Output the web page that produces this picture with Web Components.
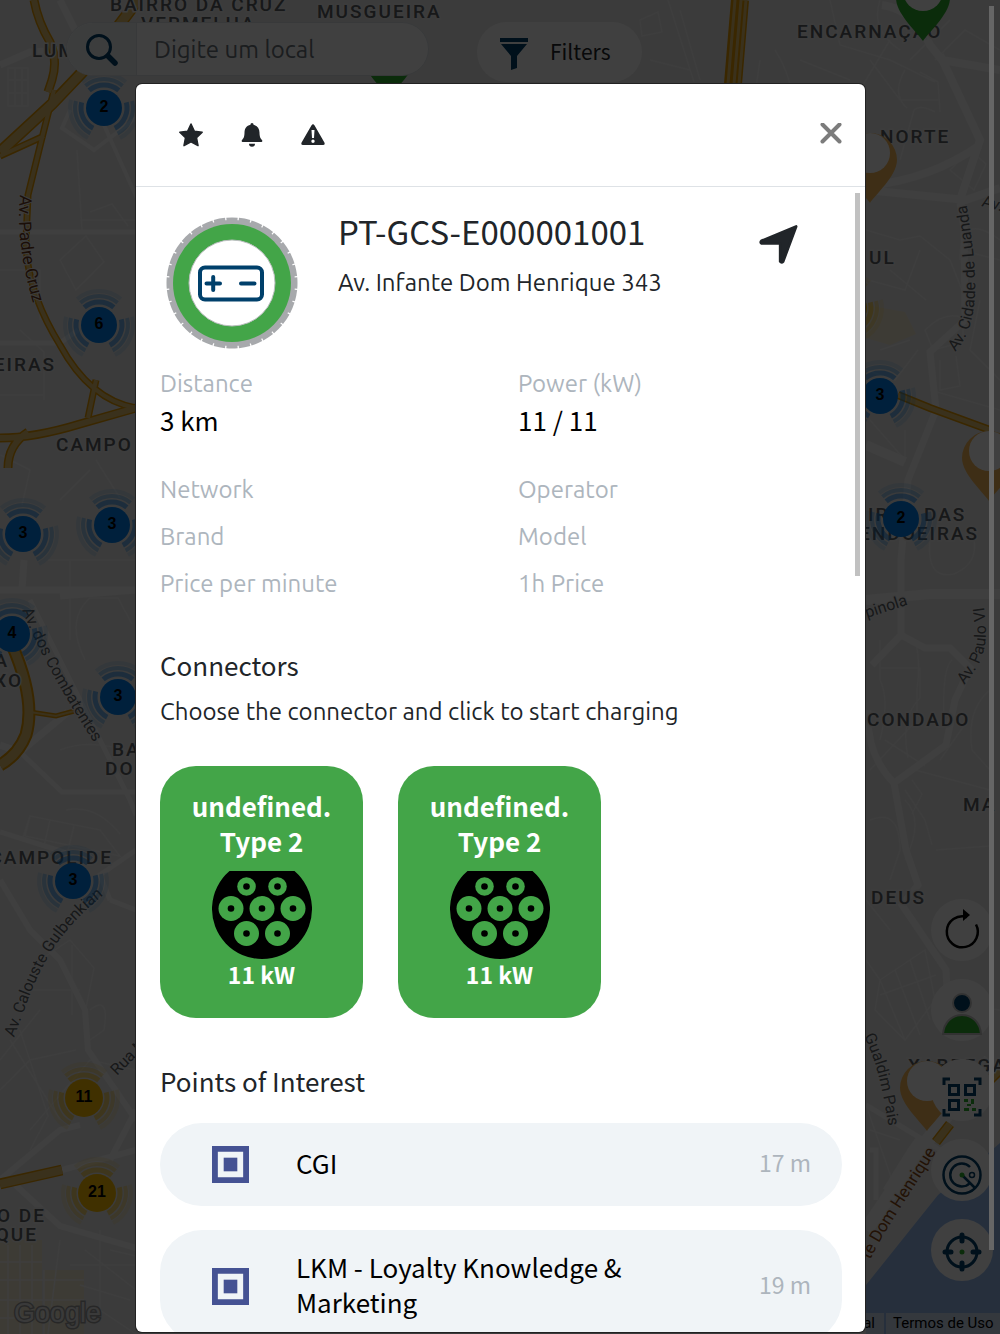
<!DOCTYPE html>
<html lang="pt">
<head>
<meta charset="utf-8">
<title>Charging map</title>
<style>
  html, body { margin: 0; height: 100%; overflow: hidden; }
  body {
    --title: "Noto Sans CJK JP", "Noto Sans", sans-serif;
    --body: Ubuntu, "Noto Sans", sans-serif;
    --green: #43a548; --navy: #00406b; --ink: #212529; --muted: #adb5bd;
    font: 24px/36px var(--body); color: var(--ink); background: #3b3b3b;
  }
</style>
</head>
<body>
<charging-app></charging-app>
<script>
const define = (name, render) => customElements.define(name, class extends HTMLElement {
  constructor() { super(); this.attachShadow({ mode: 'open' }); }
  connectedCallback() { this.shadowRoot.innerHTML = render(this); }
});

/* ---------- map ---------- */
const arcs = (r, w, o) => {
  const p = a => `${(r * Math.cos(a * Math.PI / 180)).toFixed(1)} ${(r * Math.sin(a * Math.PI / 180)).toFixed(1)}`;
  return [[-130, -50], [-14, 62], [118, 194]].map(([a, b]) =>
    `<path d="M${p(a)}A${r} ${r} 0 0 1 ${p(b)}" fill="none" stroke="currentColor" stroke-width="${w}" opacity="${o}"/>`).join('');
};
const cluster = ([x, y, n, c]) => `<g transform="translate(${x} ${y})" color="${c ? '#ffbf00' : '#0080f0'}">
  ${arcs(23, 5, .5)}${arcs(29, 4, .3)}${arcs(34, 4, .12)}
  <circle r="${c ? 19 : 18}" fill="currentColor"/>${n ? `<text class="count" y="4">${n}</text>` : ''}</g>`;
const pin = (x, y, c) => `<g transform="translate(${x} ${y})"><path d="M0 49C-5 41-27 22-27 6A27 27 0 0 1 27 6C27 22 5 41 0 49Z" fill="${c}"/><circle cy="-1" r="20" fill="#fff"/></g>`;
const area = ([x, y, t, a]) => `<text class="area" x="${x}" y="${y}" text-anchor="${a || 'start'}">${t}</text>`;
const streets = [
  ['M20 195C17 225 20 270 42 330', 'Av. Padre Cruz', '#6b3a1c', 17],
  ['M22 610C38 650 60 690 100 752', 'Av. dos Combatentes'],
  ['M14 1038C34 985 44 940 110 890', 'Av. Calouste Gulbenkian'],
  ['M117 1076L160 1032', 'Rua M'],
  ['M981 206L1020 216', 'Av.'],
  ['M955 352C983 322 977 270 966 200', 'Av. Cidade de Luanda'],
  ['M867 618L922 600', 'pinola'],
  ['M964 685C985 660 990 645 983 600', 'Av. Paulo VI'],
  ['M864 1036C876 1060 882 1085 890 1135', 'Gualdim Pais'],
  ['M870 1260C890 1220 914 1190 948 1132', 'te Dom Henrique', '#8a4a14', 17]
];
define('city-map', () => `
<style>
  :host { display: block; height: 100%; }
  svg { display: block; width: 100%; height: 100%; background: #ebebeb; }
  .minor path { fill: none; stroke: #f5f5f5; stroke-width: 1.5; }
  .road path { fill: none; stroke: #fafafa; stroke-width: 7; }
  .edge path { fill: none; stroke: #e79b00; }
  .fill path { fill: none; stroke: #e8c470; }
  .area { font: 500 19px Roboto, sans-serif; letter-spacing: 2px; fill: #5c6266; stroke: #f0f0f0; stroke-width: 3px; paint-order: stroke; }
  .street { font-family: Roboto, sans-serif; stroke: #f0f0f0; stroke-width: 2px; paint-order: stroke; }
  .count { font: bold 16px "Liberation Sans", sans-serif; text-anchor: middle; fill: #000; }
  .logo { font: 27px "Liberation Sans", sans-serif; fill: #e8e8e8; stroke: #9c9c9c; stroke-width: 3px; paint-order: stroke; }
  .legal { font: 15px Roboto, sans-serif; fill: #000; }
</style>
<svg viewBox="0 0 1000 1334" preserveAspectRatio="xMidYMid slice" role="img" aria-label="Map">
  <path d="M1000 1143L980 1160L938 1195L866 1285V1334H1000Z" fill="#98bdf0"/>
  <path d="M0 1240H42V1334H0ZM44 1270H84V1334H44Z" fill="#f4ecd2"/>
  <path d="M866 305L905 312L916 334L890 345L866 338Z" fill="#f4ecd2"/>
  <g class="minor">
    <path d="M8 68h20v38h-20zM8 80h20M8 93h20M15 68v38M22 68v38"/>
    <path d="M80 220H136M77 150L82 230M90 212L112 204L128 226M60 260L86 236L104 262L76 290ZM0 270H40V320M20 330L44 352V400M0 395H44M96 460L120 498M60 500L90 470M0 455L30 470L22 505M48 560H136M70 560V640M85 660q-20-40 5-62h28l14 26"/>
    <path d="M60 750Q90 738 130 752M30 816L100 830L120 856L25 836ZM30 816L22 840M50 820L44 846M74 826L68 850M66 810q30-6 54 24"/>
    <path d="M72 945v70M40 960l30-20 24 28-8 40M20 990h60M10 1040L60 1120M0 1090L30 1060L76 1050M30 1130L90 1060L136 1070M20 1030L48 1116L30 1150M0 1060L40 1010M90 1010q20-16 14 20l-14 10"/>
    <path d="M8 1245v89M20 1245v89M32 1245v89M44 1270v64M0 1262h42M0 1280h84M0 1300h84M0 1318h84M60 1240L48 1334M85 1250L136 1290M100 1230V1310L136 1334M110 1250L136 1256M70 1265H136M80 1285L130 1300"/>
    <path d="M640 20l18-8 4 20-20 4zM680 10L700 80M690 70L650 60M668 0L694 82M760 60L750 130M775 50Q800 90 790 130M880 0Q870 30 900 50M830 0L840 45L890 60L935 82M800 60L850 80M870 60L900 100L940 100M890 40L860 90M910 60L950 20M905 70q-14 24 2 38M920 72l18 10 2 30M935 60l30-30 35 20M950 170l20-20 16 14-12 26zM900 160L914 110Q920 104 935 112"/>
    <path d="M866 230L900 240L920 236L950 260L966 300M920 250L905 290L868 280M890 270L926 300M925 330q20-20 38-12v24l-30 8zM940 360v30l20-4-4-30M905 430v30L870 420M880 350L910 340M866 370L895 380L918 350M930 390L1000 410M980 300L970 350L1000 380M1000 260L960 250M1000 240q-40-30-40 20"/>
    <path d="M930 540q-4 40 24 34 24-10 20-34M880 668h40v30q-20 20-12 60M880 640v40q10 20 0 60M915 640q6 20 2 50v30L870 770M952 660q-10 8-8 60M905 790L925 820L932 845M915 770L990 790M885 740l40 26M968 720L940 760M990 690q-24 20-18 60l18 20M936 850L990 846M905 800q20 20 0 60M870 820q30-12 30 30l-10 30M912 780l10 14-10 20"/>
    <path d="M880 980L925 950L935 1000L905 1040L875 1010ZM880 980L905 1040M895 970L920 1035M910 960L930 1020M866 960L880 980M932 1000L1000 1010M880 995L936 975M866 900L890 930M870 1130L900 1140M866 1105L892 1180"/>
  </g>
  <g class="road">
    <path d="M0 65L30 52L66 50L80 40L60 0"/><path d="M104 125L140 205M70 110L62 128L94 150L136 118" style="stroke-width:4"/>
    <path d="M0 232L136 232M0 343H60L78 330" style="stroke-width:5"/><path d="M0 590H136L60 596M22 590L24 560M0 745L20 752L68 712"/>
    <path d="M30 600L130 800L136 815M20 752L62 792H136" style="stroke-width:5"/><path d="M0 832L70 854M110 900L136 910M136 850L100 875L110 900" style="stroke-width:5"/>
    <path d="M0 880L30 930L60 960L85 1010L88 1050L136 1120M136 1110L110 1160M0 1180L60 1130L80 1125M10 1180L60 1226L136 1248M62 1170L136 1150" style="stroke-width:6"/>
    <path d="M882 5Q915 10 930 45L942 60L1000 70M940 55L980 140L960 200L964 225M866 190L966 200L1000 188M866 186Q930 180 980 145" style="stroke-width:8"/>
    <path d="M964 225L965 320L930 352L936 410L908 480L901 560L901 635L872 665" style="stroke-width:7"/><path d="M866 445L905 462M866 600L930 594H1000" style="stroke-width:10"/>
    <path d="M901 635L925 648H950L970 668L955 700L946 745L894 783Q866 755 868 710M894 783L906 850L918 885L902 905L946 970L948 1010" style="stroke-width:7"/>
    <path d="M866 1105L940 1150M885 1190L910 1150L920 1136M870 1150H876V1200" style="stroke-width:5"/><path d="M990 1060L920 1150L866 1230" style="stroke-width:14"/>
  </g>
  <g class="edge">
    <path d="M34 0Q38 22 50 42Q58 60 52 80L48 92" style="stroke-width:9"/><path d="M138 0L90 64L52 104L0 152" style="stroke-width:12"/>
    <path d="M54 90L42 138L28 195L26 240Q26 290 60 345Q90 400 136 408M0 156L44 136M96 380L88 418" style="stroke-width:7"/><path d="M0 438Q34 438 80 424L136 408M28 432Q8 445 8 468" style="stroke-width:9"/>
    <path d="M12 645Q36 700 26 735Q18 755 0 765" style="stroke-width:13"/><path d="M30 712L56 716L78 710" style="stroke-width:5"/><path d="M0 1184L62 1170" style="stroke-width:11"/>
    <path d="M740 0L733 84" style="stroke-width:18"/><path d="M898 395L930 408L990 430" style="stroke-width:8"/><path d="M1000 1070L988 1082M950 1124L936 1142" style="stroke-width:10"/>
  </g>
  <g class="fill">
    <path d="M34 0Q38 22 50 42Q58 60 52 80L48 92" style="stroke-width:6"/><path d="M138 0L90 64L52 104L0 152" style="stroke-width:9"/>
    <path d="M54 90L42 138L28 195L26 240Q26 290 60 345Q90 400 136 408M0 156L44 136M96 380L88 418" style="stroke-width:4"/><path d="M0 438Q34 438 80 424L136 408M28 432Q8 445 8 468" style="stroke-width:6"/>
    <path d="M12 645Q36 700 26 735Q18 755 0 765" style="stroke-width:9"/><path d="M30 712L56 716L78 710" style="stroke-width:2"/><path d="M0 1184L62 1170" style="stroke-width:8"/>
    <path d="M735 0L728 84M741 0L734 84M746 0L739 84" style="stroke-width:3"/><path d="M898 395L930 408L990 430" style="stroke-width:5"/><path d="M1000 1070L988 1082M950 1124L936 1142" style="stroke-width:7"/>
  </g>
  ${[[110, 11, 'BAIRRO DA CRUZ'], [141, 30, 'VERMELHA'], [317, 18, 'MUSGUEIRA'], [32, 57, 'LUM'], [797, 38, 'ENCARNAÇÃO'], [880, 143, 'NORTE'], [869, 264, 'UL'],
     [56, 371, 'EIRAS', 'end'], [56, 451, 'CAMPO'], [868, 521, 'IR'], [924, 521, 'DAS'], [979, 540, 'ENDOEIRAS', 'end'], [9, 667, 'A', 'end'], [23, 687, 'XO', 'end'], [112, 756, 'BA'],
     [105, 775, 'DO'], [113, 864, 'CAMPOLIDE', 'end'], [867, 726, 'CONDADO'], [963, 811, 'MA'], [871, 904, 'DEUS'], [908, 1072, 'XABREGAS'], [46, 1222, 'O DE', 'end'], [38, 1241, 'QUE', 'end']].map(area).join('')}
  ${streets.map(([d, t, c, s], i) => `<path id="s${i}" d="${d}" fill="none"/><text class="street" font-size="${s || 16}" fill="${c || '#5c6266'}"><textPath href="#s${i}">${t}</textPath></text>`).join('')}
  ${pin(389, 49, '#2fae2f')}${pin(923, -8, '#2fae2f')}${pin(870, 154, '#f5b85a')}${pin(989, 452, '#f5b85a')}${pin(927, 1082, '#f5b85a')}
  ${[[104, 108, 2], [99, 325, 6], [23, 534, 3], [112, 525, 3], [12, 634, 4], [118, 697, 3], [73, 881, 3], [880, 396, 3], [901, 519, 2], [84, 1098, 11, 1], [97, 1193, 21, 1], [848, 308, 0, 1]].map(cluster).join('')}
  <text class="logo" x="14" y="1322">Google</text>
  <path d="M860 1313H884V1334H860ZM886 1313H1000V1334H886Z" fill="#f5f5f5" opacity=".6"/>
  <text class="legal" x="875" y="1328" text-anchor="end">al</text><text class="legal" x="893" y="1328">Termos de Uso</text>
</svg>`);

/* ---------- controls on the map ---------- */
define('search-box', () => `
<style>
  :host { display: block; flex: 0 1 363px; min-width: 0; }
  form { display: flex; height: 54px; box-sizing: border-box; border: 1px solid #dfe4e8; border-radius: 27px; overflow: hidden; background: #fff; }
  button { flex: none; width: 70px; border: 0; border-right: 1px solid #dfe4e8; background: #f0f4f4; padding: 0 0 0 18px; }
  svg { display: block; width: 34px; height: 34px; }
  input { flex: 1; width: 0; min-width: 0; border: 0; padding: 0 17px; font: 24px var(--body); background: none; }
  input::placeholder { color: #6c757d; opacity: 1; }
</style>
<form role="search">
  <button type="button" aria-label="Search"><svg viewBox="0 0 34 34" fill="none" stroke="#00406b"><circle cx="14" cy="15" r="11.500" stroke-width="3"/><path d="M23 24L30 31" stroke-width="5.500" stroke-linecap="round"/></svg></button>
  <input type="search" aria-label="Digite um local" placeholder="Digite um local">
</form>`);
define('filter-button', () => `
<style>
  :host { display: block; }
  button { display: flex; align-items: center; gap: 21px; height: 60px; padding: 0 32px 2px 23px; border: 0; border-radius: 30px; background: #fff; font: 21px/36px var(--title); color: #212529; }
  svg { width: 29px; height: 33px; margin-top: 4px; }
</style>
<button type="button"><svg viewBox="0 0 29 33" fill="#00406b"><path d="M0 1H28V5H0ZM1 7H27L17 19V31L11 33V19Z"/></svg><slot></slot></button>`);
const tools = {
  refresh: ['Refresh', 0, '<path d="M34 14.500A15.500 15.500 0 1 1 25 7" fill="none" stroke="#000" stroke-width="2.500"/><path d="M21-1L28 5L21 11Z"/>'],
  user: ['Account', -4, '<path d="M1 40C2 28 10 21 20 21S38 28 39 40Z" fill="#2fae2f" stroke="#c8c8c8" stroke-width="2"/><circle cx="20" cy="9" r="9" fill="#00406b" stroke="#c8c8c8" stroke-width="2"/>'],
  scan: ['Scan code', -7, '<g fill="none" stroke="#00406b" stroke-width="3"><path d="M2 8V2H8M32 2H38V8M38 32V38H32M8 38H2V32"/><path d="M7.500 8.500h9v9h-9zM23.500 8.500h9v9h-9zM7.500 23.500h9v9h-9z"/></g><path d="M22 22h4v3h-4zM29 22h3v5h-3zM25 27h4v2h-4zM22 31h5v3h-5zM30 31h4v3h-4z" fill="#2fae2f"/>'],
  radar: ['Nearby', -5, '<g fill="none" stroke="#00406b" stroke-width="2.500"><circle cx="20" cy="20" r="18.500"/><path d="M28 12A11.500 11.500 0 1 0 28 28M20 20L33 33"/><circle cx="30" cy="20" r="2.500" stroke-width="1.500"/></g><circle cx="20" cy="20" r="2.500" fill="#2fae2f"/>'],
  locate: ['My location', -2, '<g fill="none" stroke="#00406b"><circle cx="20" cy="20" r="15" stroke-width="3"/><path d="M20 3V9M20 31V37M3 20H9M31 20H37" stroke-width="5" stroke-linecap="round"/></g><circle cx="20" cy="20" r="2.500" fill="#2fae2f"/>']
};
define('map-tool', el => {
  const [label, top, art] = tools[el.getAttribute('kind')];
  return `
<style>
  :host { display: block; }
  button { display: grid; place-items: center; width: 62px; height: 62px; border: 0; border-radius: 50%; background: #fff; padding: 0; }
  svg { width: 40px; height: 40px; overflow: visible; }
</style>
<button type="button" aria-label="${label}"><svg viewBox="0 ${top} 40 40">${art}</svg></button>`;
});

/* ---------- dialog parts ---------- */
const icons = {
  star: ['Favourite', '<path d="M12 1L15.400 8.300L23.200 9.200L17.500 14.600L19 22.600L12 18.800L5 22.600L6.500 14.600L.8 9.200L8.600 8.300Z" stroke="currentColor" stroke-width="1.500" stroke-linejoin="round"/>'],
  bell: ['Notify', '<path d="M12 0C13 0 13.500.700 13.500 1.800C17.500 2.600 19.500 5.700 19.500 9.500C19.500 14 20.600 15.500 22 17C22.700 18 22.200 19 21 19H3C1.800 19 1.300 18 2 17C3.400 15.500 4.500 14 4.500 9.500C4.500 5.700 6.500 2.600 10.500 1.800C10.500.700 11 0 12 0ZM9 20.800H15A3 3 0 0 1 9 20.800Z"/>'],
  warn: ['Report', '<path fill-rule="evenodd" d="M10.400 2.400Q12 0 13.600 2.400L23.400 19.600Q24.400 22 22 22H2Q-.4 22 .6 19.600ZM10.500 7L11 15H13L13.500 7ZM12 16.500A1.700 1.700 0 1 0 12 19.900A1.700 1.700 0 1 0 12 16.500Z"/>'],
  close: ['Close', '<path d="M3.500 1.500L20.500 18.500M20.500 1.500L3.500 18.500" stroke="#7c7c7c" stroke-width="4" stroke-linecap="round"/>'],
  navigate: ['Directions', '<path d="M22.300 1.500L14.500 22.500Q13.500 23.500 12.700 22.500V11.700H1.500Q.5 11 1.500 10.100Z" stroke="currentColor" stroke-width="1.600" stroke-linejoin="round"/>']
};
define('icon-button', el => `
<style>
  :host { display: block; --size: 24px; }
  button { display: block; padding: 0; border: 0; background: none; color: #212529; }
  svg { display: block; width: var(--size); height: var(--size); fill: currentColor; }
</style>
<button type="button" aria-label="${icons[el.getAttribute('icon')][0]}"><svg viewBox="0 0 24 24">${icons[el.getAttribute('icon')][1]}</svg></button>`);
define('station-badge', () => `
<style>:host { display: block; } svg { display: block; width: 132px; height: 132px; }</style>
<svg viewBox="0 0 132 132" role="img" aria-label="Available">
  <circle cx="66" cy="66" r="60" fill="none" stroke="#a7a9ac" stroke-width="6"/>
  <circle cx="66" cy="66" r="63" fill="none" stroke="#a7a9ac" stroke-width="5" pathLength="320" stroke-dasharray="9 1" stroke-dashoffset="4.500"/>
  <circle cx="66" cy="66" r="59" fill="#43a548"/><circle cx="66" cy="66" r="43" fill="#fff" stroke="#bcbec0" stroke-width="1"/>
  <g fill="none" stroke="#00406b" stroke-width="4"><rect x="34" y="50.500" width="62" height="32" rx="5"/><path d="M40.500 66.500H54M47.200 60V73M75 66.500H88.500" stroke-linecap="round"/></g>
</svg>`);
define('fact-item', el => `
<style>
  :host { display: block; }
  dl, dd { margin: 0; }
  dt { color: var(--muted); }
  dd { font: 26px/35px var(--title); color: #000; }
</style>
<dl><dt>${el.getAttribute('label')}</dt>${el.hasChildNodes() ? '<dd><slot></slot></dd>' : ''}</dl>`);
const hole = (x, y, r) => `<circle cx="${x}" cy="${y}" r="${r}" fill="#43a548"/><circle cx="${x}" cy="${y}" r="3.300"/>`;
define('connector-card', el => `
<style>
  :host { display: block; flex: 0 1 203px; }
  button { display: flex; flex-direction: column; align-items: center; width: 100%; height: 252px; padding: 22px 20px; border: 0; border-radius: 36px; background: var(--green); color: #fff; font: bold 26px/35px var(--title); }
  svg { flex: none; width: 100px; height: 88px; margin: 13px 0 -2px; }
  small { font-size: 23px; }
</style>
<button type="button"><slot></slot>
  <svg viewBox="0 0 100 88"><path d="M17.500 0H82.500A50 50 0 1 1 17.500 0Z"/>
  ${hole(34.5, 15.5, 9.3)}${hole(65.5, 15.5, 9.3)}${hole(19, 37.5, 12.5)}${hole(50, 37.5, 12.5)}${hole(81, 37.5, 12.5)}${hole(34.5, 62.5, 12.5)}${hole(65.5, 62.5, 12.5)}</svg>
  <small>${el.getAttribute('power')}</small></button>`);
define('poi-row', el => `
<style>
  :host { display: flex; align-items: center; padding: 23px 31px 23px 52px; border-radius: 42px; background: #f0f4f7; font: 26px/35px var(--title); color: #000; }
  svg { flex: none; width: 37px; height: 37px; margin-right: 47px; }
  span, small { margin-top: -4px; }
  span { flex: 1; }
  small { font-size: 23px; color: var(--muted); margin-left: 24px; }
</style>
<svg viewBox="0 0 38 38" fill="none"><path d="M3 3H35V35H3Z" stroke="#455293" stroke-width="6"/><path d="M12 12H26V26H12Z" fill="#455293"/></svg>
<span><slot></slot></span><small>${el.getAttribute('distance')}</small>`);
define('station-dialog', () => `
<style>
  :host { display: flex; flex-direction: column; position: relative; box-sizing: border-box; height: 100%; background: #fff; border-radius: 6px; overflow: hidden; box-shadow: 0 0 0 1px #222; }
  header { display: flex; align-items: center; gap: 37px; flex: none; height: 102px; padding: 0 22px 0 43px; border-bottom: 1px solid #dee2e6; }
  header icon-button:last-child { margin-left: auto; }
  main { flex: 1; min-height: 0; overflow-y: auto; scrollbar-width: none; padding: 25px 23px 0 24px; }
  .head { display: flex; padding: 0 43px 0 6px; }
  station-badge { margin-top: 5px; }
  .name { flex: 1; margin-left: 40px; }
  h1 { margin: 0 0 15px; font: 33px/38px var(--title); }
  p { margin: 0; }
  .head icon-button { --size: 40px; margin-top: 12px; }
  .facts { display: grid; grid-template-columns: 358px 1fr; row-gap: 11px; margin-top: 17px; }
  .facts + .facts { margin-top: 35px; }
  h2 { margin: 45px 0 11px; font: 26px/36px var(--title); }
  .cards { display: flex; gap: 35px; margin: 36px 0 0; }
  .pois { display: flex; flex-direction: column; gap: 24px; margin-top: 24px; }
  .thumb { position: absolute; right: 5px; top: 109px; width: 5px; height: 383px; background: #c1c1c1; }
</style>
<header><icon-button icon="star"></icon-button><icon-button icon="bell"></icon-button><icon-button icon="warn"></icon-button><icon-button icon="close"></icon-button></header>
<main>
  <div class="head"><station-badge></station-badge><div class="name"><h1>PT-GCS-E000001001</h1><p>Av. Infante Dom Henrique 343</p></div><icon-button icon="navigate"></icon-button></div>
  <div class="facts"><fact-item label="Distance">3 km</fact-item><fact-item label="Power (kW)">11 / 11</fact-item></div>
  <div class="facts"><fact-item label="Network"></fact-item><fact-item label="Operator"></fact-item><fact-item label="Brand"></fact-item><fact-item label="Model"></fact-item><fact-item label="Price per minute"></fact-item><fact-item label="1h Price"></fact-item></div>
  <h2>Connectors</h2>
  <p>Choose the connector and click to start charging</p>
  <div class="cards"><connector-card power="11 kW">undefined.<br>Type 2</connector-card><connector-card power="11 kW">undefined.<br>Type 2</connector-card></div>
  <h2>Points of Interest</h2>
  <div class="pois"><poi-row distance="17 m">CGI</poi-row><poi-row distance="19 m">LKM - Loyalty Knowledge &amp; Marketing</poi-row></div>
</main>
<div class="thumb"></div>`);

/* ---------- page ---------- */
define('charging-app', () => `
<style>
  :host { display: grid; height: 100vh; grid-template: 100% / 100%; overflow: hidden; }
  city-map, .controls, .shade, .scroll { grid-area: 1 / 1; min-width: 0; min-height: 0; }
  .controls { display: flex; flex-direction: column; justify-content: space-between; z-index: 1; }
  .top { display: flex; align-items: flex-start; gap: 48px; padding: 22px 66px 0; }
  .tools { display: flex; flex-direction: column; align-items: flex-end; gap: 18px; padding: 0 7px 53px; }
  .shade { z-index: 2; background: rgba(0, 0, 0, .75); padding: 84px 135px 2px 136px; }
  .scroll { z-index: 3; justify-self: end; width: 5px; margin: 6px 6px 84px 0; background: #666; }
</style>
<city-map></city-map>
<div class="controls">
  <div class="top"><search-box></search-box><filter-button>Filters</filter-button></div>
  <div class="tools"><map-tool kind="refresh"></map-tool><map-tool kind="user"></map-tool><map-tool kind="scan"></map-tool><map-tool kind="radar"></map-tool><map-tool kind="locate"></map-tool></div>
</div>
<div class="shade"><station-dialog role="dialog" aria-modal="true" aria-label="PT-GCS-E000001001"></station-dialog></div>
<div class="scroll"></div>`);
</script>
</body>
</html>
